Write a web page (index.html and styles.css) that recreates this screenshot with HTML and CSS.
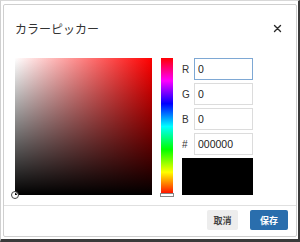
FILE: index.html
```html
<!DOCTYPE html>
<html lang="ja">
<head>
  <meta charset="UTF-8">
  <meta name="viewport" content="width=device-width, initial-scale=1.0">
  <title>カラーピッカー</title>
  <link rel="stylesheet" href="styles.css">
</head>
<body>
  <div class="frame">
    <div class="dialog">
      <div class="dialog-header">
        <h1>カラーピッカー</h1>
        <button class="close" aria-label="閉じる">
          <svg width="9" height="9" viewBox="0 0 9 9">
            <path d="M1.5 1.5 L7.5 7.5 M7.5 1.5 L1.5 7.5" stroke="#2a2a2a" stroke-width="1.4" stroke-linecap="round"/>
          </svg>
        </button>
      </div>

      <div class="dialog-body">
        <div class="sv-box">
          <span class="sv-cursor"></span>
        </div>
        <div class="hue-bar">
          <span class="hue-handle"></span>
        </div>
        <div class="fields">
          <label class="field"><span>R</span><input class="focused" type="text" value="0"></label>
          <label class="field"><span>G</span><input type="text" value="0"></label>
          <label class="field"><span>B</span><input type="text" value="0"></label>
          <label class="field"><span>#</span><input type="text" value="000000"></label>
          <div class="preview"></div>
        </div>
      </div>

      <div class="dialog-footer">
        <button class="btn btn-cancel">取消</button>
        <button class="btn btn-save">保存</button>
      </div>
    </div>
  </div>
</body>
</html>
```

FILE: styles.css
```css
body {
  margin: 0;
  padding: 0;
  background-color: #fff;
  font-family: "Liberation Sans", "Noto Sans CJK JP", sans-serif;
  color: #333;
}

.frame {
  width: 300px;
  height: 242px;
  box-sizing: border-box;
  border-left: 1px solid #d0d0d0;
  border-top: 1px solid #d8d8d8;
  border-right: 2px solid #3a3a3a;
  border-bottom: 3px solid #3a3a3a;
  padding: 3px 0 0 2px;
}

.dialog {
  width: 294px;
  height: 233px;
  box-sizing: border-box;
  border: 1px solid #cfcfcf;
  border-radius: 2px;
  background-color: #fff;
  display: flex;
  flex-direction: column;
}

.dialog-header {
  height: 46px;
  display: flex;
  align-items: center;
  justify-content: space-between;
  padding: 0 14px 0 11px;
}

.dialog-header h1 {
  margin: 0;
  font-size: 12px;
  font-weight: normal;
  font-family: "Noto Sans CJK JP", sans-serif;
  color: #333;
}

.close {
  border: none;
  background: none;
  padding: 0;
  width: 9px;
  height: 9px;
  display: flex;
  cursor: pointer;
}

.dialog-body {
  display: flex;
  padding: 7px 0 10px 11px;
}

.sv-box {
  position: relative;
  width: 137px;
  height: 137px;
  background: linear-gradient(to top, #000, rgba(0, 0, 0, 0)),
              linear-gradient(to right, #fff, #f00);
}

.sv-cursor {
  position: absolute;
  left: -4px;
  bottom: -4px;
  width: 6px;
  height: 6px;
  border: 1px solid #444;
  border-radius: 50%;
  box-shadow: inset 0 0 0 1px #fff;
}

.hue-bar {
  position: relative;
  width: 12px;
  height: 137px;
  margin-left: 9px;
  background: linear-gradient(to bottom, #f00, #f0f, #00f, #0ff, #0f0, #ff0, #f00);
}

.hue-handle {
  position: absolute;
  left: -1px;
  bottom: -2px;
  width: 12px;
  height: 2px;
  border: 1px solid #888;
  background-color: #fff;
}

.fields {
  width: 71px;
  margin-left: 9px;
  display: flex;
  flex-direction: column;
  gap: 3px;
}

.field {
  display: flex;
  align-items: center;
  height: 22px;
}

.field span {
  width: 12px;
  font-size: 10px;
  color: #333;
}

.field input {
  width: 59px;
  height: 22px;
  box-sizing: border-box;
  border: 1px solid #dcdcdc;
  padding: 0 3px;
  margin: 0;
  font-family: "Liberation Sans", sans-serif;
  font-size: 10.5px;
  color: #222;
  outline: none;
}

.field input.focused {
  border-color: #7ea8d4;
}

.preview {
  height: 37px;
  background-color: #000;
}

.dialog-footer {
  border-top: 1px solid #e0e0e0;
  display: flex;
  justify-content: flex-end;
  gap: 12px;
  padding: 4px 8px 5px 0;
}

.btn {
  height: 20px;
  border: none;
  border-radius: 2px;
  font-family: "Noto Sans CJK JP", sans-serif;
  font-size: 9px;
  font-weight: bold;
  cursor: pointer;
}

.btn-cancel {
  width: 31px;
  background-color: #ededed;
  color: #444;
}

.btn-save {
  width: 38px;
  background-color: #2a6ead;
  color: #fff;
}
```
